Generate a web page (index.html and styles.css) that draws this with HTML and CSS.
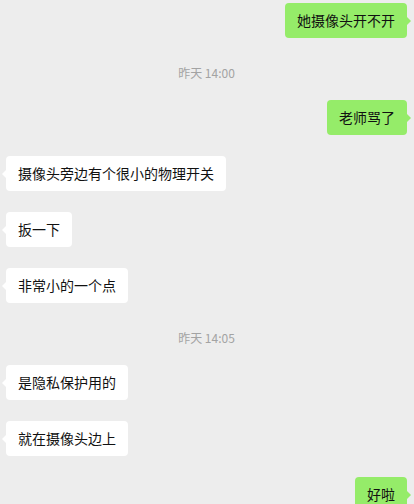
FILE: index.html
```html
<!DOCTYPE html>
<html lang="zh-CN">

<head>
    <meta charset="UTF-8">
    <meta name="viewport" content="width=device-width, initial-scale=1.0">
    <title>聊天</title>
    <link rel="stylesheet" href="styles.css">
</head>

<body>
    <div class="chat">
        <div class="row me"><div class="bubble">她摄像头开不开</div></div>
        <div class="time">昨天 14:00</div>
        <div class="row me"><div class="bubble">老师骂了</div></div>
        <div class="row"><div class="bubble">摄像头旁边有个很小的物理开关</div></div>
        <div class="row"><div class="bubble">扳一下</div></div>
        <div class="row"><div class="bubble">非常小的一个点</div></div>
        <div class="time">昨天 14:05</div>
        <div class="row"><div class="bubble">是隐私保护用的</div></div>
        <div class="row"><div class="bubble">就在摄像头边上</div></div>
        <div class="row me"><div class="bubble">好啦</div></div>
    </div>
</body>

</html>
```

FILE: styles.css
```css
html,
body {
    margin: 0;
    padding: 0;
}

body {
    width: 414px;
    height: 504px;
    overflow: hidden;
    background-color: #ededed;
    font-family: "Noto Sans CJK SC", "Noto Sans", sans-serif;
}

.chat {
    display: flex;
    flex-direction: column;
    padding: 3px 7px 0 6px;
}

.row {
    display: flex;
    margin-bottom: 21px;
}

.row.me {
    justify-content: flex-end;
}

.bubble {
    position: relative;
    padding: 8px 12px;
    font-size: 14px;
    line-height: 19px;
    color: #111;
    background-color: #fff;
    border-radius: 4px;
}

/* 气泡小尖角 */
.bubble::before {
    content: "";
    position: absolute;
    top: 13px;
    left: -9px;
    border: 5px solid transparent;
    border-right-color: #fff;
}

.me .bubble {
    background-color: #95ec69;
}

.me .bubble::before {
    left: auto;
    right: -9px;
    border-right-color: transparent;
    border-left-color: #95ec69;
}

.time {
    margin: 4px 0 17px;
    text-align: center;
    font-size: 12px;
    line-height: 20px;
    color: #a3a3a3;
}
```
